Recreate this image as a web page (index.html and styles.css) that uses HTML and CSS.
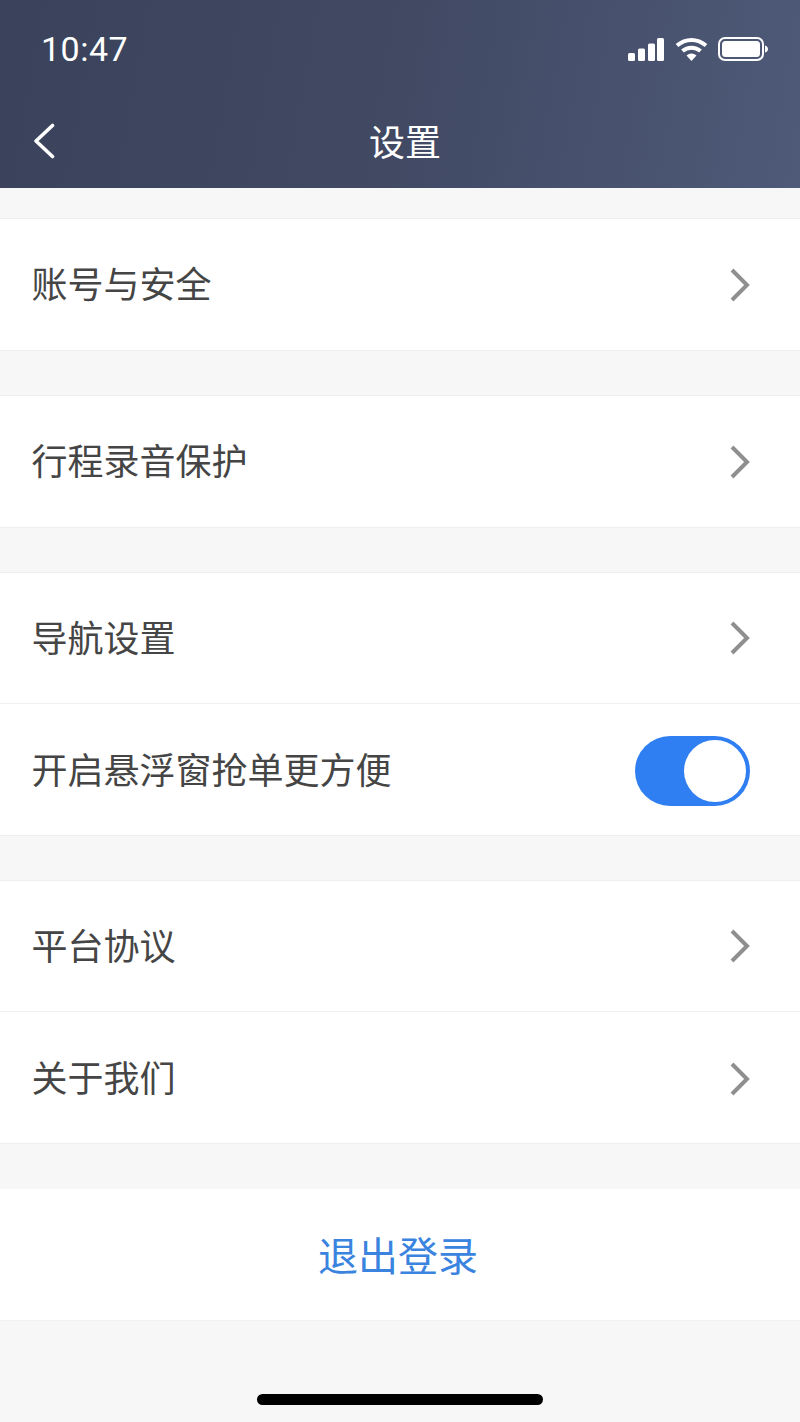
FILE: index.html
```html
<!DOCTYPE html>
<html lang="zh-CN">
<head>
<meta charset="utf-8">
<title>设置</title>
<link rel="stylesheet" href="styles.css">
</head>
<body>
<div class="page">
  <header class="header">
    <div class="status">
      <span class="time">10:47</span>
      <div class="status-icons">
        <svg class="signal" width="36" height="23" viewBox="0 0 36 23"><g fill="#fff"><rect x="0" y="15" width="7" height="8" rx="1.5"/><rect x="10" y="10.500" width="7" height="12.500" rx="1.5"/><rect x="20" y="5.500" width="7" height="17.500" rx="1.5"/><rect x="29" y="0" width="7" height="23" rx="1.5"/></g></svg>
        <svg class="wifi" width="33" height="24" viewBox="0 0 33 24"><g fill="none" stroke="#fff" stroke-width="4"><path d="M2 8.500C10.500 1 22.500 1 31 8.500"/><path d="M7.500 14C12.500 9.500 20.500 9.500 25.500 14"/></g><path d="M11.500 18.500C14.500 15.800 18.500 15.800 21.500 18.500L16.500 24Z" fill="#fff"/></svg>
        <svg class="battery" width="50" height="24" viewBox="0 0 50 24"><rect x="1" y="1" width="44" height="22" rx="6" fill="none" stroke="#fff" stroke-width="2"/><rect x="4" y="4" width="38" height="16" rx="3.500" fill="#fff"/><path d="M47 8.500C49 9 50 10.500 50 12C50 13.500 49 15 47 15.500Z" fill="#fff"/></svg>
      </div>
    </div>
    <div class="nav">
      <svg class="back" width="24" height="36" viewBox="0 0 24 36"><path d="M20.500 2.500L4 18L20.500 33.500" fill="none" stroke="#fff" stroke-width="3.600" stroke-linecap="round" stroke-linejoin="round"/></svg>
      <h1 class="title">设置</h1>
    </div>
  </header>

  <section class="group first">
    <div class="row"><span class="label">账号与安全</span><svg class="chev" width="22" height="36" viewBox="0 0 22 36"><path d="M3 3L18 18L3 33" fill="none" stroke="#8f8f8f" stroke-width="4"/></svg></div>
  </section>
  <section class="group">
    <div class="row"><span class="label">行程录音保护</span><svg class="chev" width="22" height="36" viewBox="0 0 22 36"><path d="M3 3L18 18L3 33" fill="none" stroke="#8f8f8f" stroke-width="4"/></svg></div>
  </section>
  <section class="group">
    <div class="row short"><span class="label">导航设置</span><svg class="chev" width="22" height="36" viewBox="0 0 22 36"><path d="M3 3L18 18L3 33" fill="none" stroke="#8f8f8f" stroke-width="4"/></svg></div>
    <div class="row"><span class="label">开启悬浮窗抢单更方便</span><span class="switch"><span class="knob"></span></span></div>
  </section>
  <section class="group">
    <div class="row short"><span class="label">平台协议</span><svg class="chev" width="22" height="36" viewBox="0 0 22 36"><path d="M3 3L18 18L3 33" fill="none" stroke="#8f8f8f" stroke-width="4"/></svg></div>
    <div class="row"><span class="label">关于我们</span><svg class="chev" width="22" height="36" viewBox="0 0 22 36"><path d="M3 3L18 18L3 33" fill="none" stroke="#8f8f8f" stroke-width="4"/></svg></div>
  </section>
  <section class="group">
    <div class="row logout">退出登录</div>
  </section>

  <div class="home-wrap"><div class="home"></div></div>
</div>
</body>
</html>
```
FILE: styles.css
```css
* { box-sizing: border-box; }
html, body { margin: 0; padding: 0; }
body {
  width: 800px;
  height: 1422px;
  overflow: hidden;
  background: #f7f7f8;
  font-family: "Noto Sans CJK SC", "Liberation Sans", sans-serif;
}
.page { width: 800px; height: 1422px; display: flex; flex-direction: column; }
.header {
  height: 188px;
  flex: none;
  background: linear-gradient(100deg, #3a435b 0%, #414963 50%, #4e5a78 100%);
  color: #fff;
}
.status {
  height: 100px;
  padding: 30px 32px 0 41px;
  display: flex;
  justify-content: space-between;
  align-items: flex-start;
}
.time {
  font-family: "Roboto", "Liberation Sans", sans-serif;
  font-size: 34px;
  line-height: 38px;
  letter-spacing: 0.5px;
  color: #fff;
}
.status-icons { display: flex; align-items: center; gap: 11px; padding-top: 7px; }
.battery { margin-left: -1px; }
.nav {
  height: 88px;
  display: flex;
  align-items: center;
  justify-content: center;
  position: relative;
  padding-bottom: 9px;
}
.back { position: absolute; left: 32px; top: 23px; }
.title { margin: 0 0 0 10px; font-size: 36px; font-weight: 400; line-height: 44px; color: #fff; }
.group { margin-top: 44px; background: #fff; border-top: 1px solid #eeeeee; border-bottom: 1px solid #eeeeee; }
.group.first { margin-top: 30px; }
.row {
  height: 131px;
  padding: 0 49px 0 31.500px;
  display: flex;
  align-items: center;
  justify-content: space-between;
  background: #fff;
}
.row.short { height: 130px; }
.row + .row { border-top: 1px solid #f0f0f0; height: 132px; padding-top: 2px; }
.label { font-size: 36px; line-height: 44px; color: #454545; margin-top: -5px; }
.chev { flex: none; }
.switch {
  width: 115px;
  height: 70px;
  margin-right: 1px;
  border-radius: 35px;
  background: #2f7ff2;
  padding: 4px;
  display: flex;
  justify-content: flex-end;
}
.knob { width: 62px; height: 62px; border-radius: 50%; background: #fff; }
.logout {
  justify-content: center;
  padding: 0 4px 2px 0;
  font-size: 40px;
  color: #3a84e0;
}
.group:last-of-type { margin-top: 45px; border-top: none; border-bottom: 1px solid #f1f1f1; }
.home-wrap { flex: 1; display: flex; align-items: flex-end; justify-content: center; padding-bottom: 17px; }
.home { width: 286px; height: 11px; border-radius: 6px; background: #000; }
```
